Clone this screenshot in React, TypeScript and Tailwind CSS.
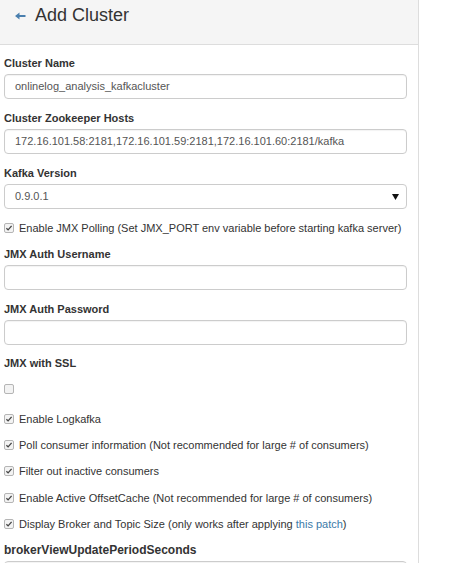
import React from "react";

const font = { fontFamily: '"Liberation Sans", Arial, sans-serif' };

function Label({ children, className = "" }: { children: React.ReactNode; className?: string }) {
  return <div className={`h-4 text-[11px] leading-4 font-bold text-[#333] ${className}`}>{children}</div>;
}

function TextInput({ value = "" }: { value?: string }) {
  return (
    <div className="mt-[3px] h-[25px] w-[403px] rounded-[4px] border border-[#ccc] bg-white pl-[10px] text-[11px] leading-[23px] text-[#555] shadow-[inset_0_1px_1px_rgba(0,0,0,0.05)]">
      {value}
    </div>
  );
}

function Check({ checked = true, children, className = "" }: { checked?: boolean; children?: React.ReactNode; className?: string }) {
  return (
    <div className={`flex h-4 items-center text-[11px] leading-4 text-[#333] ${className}`}>
      <span className="ml-[4px] flex h-[10px] w-[10px] items-center justify-center rounded-[2px] border border-[#b5b5b5] bg-[#f3f3f3]">
        {checked && (
          <svg width="8" height="8" viewBox="0 0 8 8">
            <path d="M1.4 4.2 L3.1 5.9 L6.6 1.8" fill="none" stroke="#444" strokeWidth="1.3" />
          </svg>
        )}
      </span>
      {children && <span className="ml-[5px] whitespace-nowrap">{children}</span>}
    </div>
  );
}

export default function App() {
  return (
    <div className="flex min-h-[563px] bg-white" style={font}>
      <div className="h-[563px] w-[419px] overflow-hidden border-r border-[#ddd]">
        <div className="flex h-[45px] items-start border-b border-[#ddd] bg-[#f5f5f5] pl-[15px] pt-[4px]">
          <svg className="mt-[8px]" width="11" height="8" viewBox="0 0 11 8">
            <path d="M0 4 L4.5 0.5 L4.5 3 L10.5 3 L10.5 5 L4.5 5 L4.5 7.5 Z" fill="#4a7fae" />
          </svg>
          <div className="ml-[9px] text-[18px] leading-[22px] text-[#333]">Add Cluster</div>
        </div>

        <div className="pl-[4px] pt-[10px]">
          <Label>Cluster Name</Label>
          <TextInput value="onlinelog_analysis_kafkacluster" />

          <Label className="mt-[11px]">Cluster Zookeeper Hosts</Label>
          <TextInput value="172.16.101.58:2181,172.16.101.59:2181,172.16.101.60:2181/kafka" />

          <Label className="mt-[11px]">Kafka Version</Label>
          <div className="relative mt-[3px] flex h-[25px] w-[403px] items-center rounded-[4px] border border-[#ccc] bg-white pl-[10px] text-[11px] text-[#555]">
            0.9.0.1
            <svg className="absolute right-[7px] top-[9px]" width="7" height="6" viewBox="0 0 7 6">
              <path d="M0 0 L7 0 L3.5 6 Z" fill="#111" />
            </svg>
          </div>

          <div className="-ml-[4px]">
            <Check className="mt-[11px]">Enable JMX Polling (Set JMX_PORT env variable before starting kafka server)</Check>
          </div>

          <Label className="mt-[10px]">JMX Auth Username</Label>
          <TextInput />

          <Label className="mt-[11px]">JMX Auth Password</Label>
          <TextInput />

          <Label className="mt-[10px]">JMX with SSL</Label>

          <div className="-ml-[4px]">
            <Check className="mt-[10px]" checked={false} />
            <Check className="mt-[14px]">Enable Logkafka</Check>
            <Check className="mt-[10px]">Poll consumer information (Not recommended for large # of consumers)</Check>
            <Check className="mt-[10px]">Filter out inactive consumers</Check>
            <Check className="mt-[11px]">Enable Active OffsetCache (Not recommended for large # of consumers)</Check>
            <Check className="mt-[10px]">
              Display Broker and Topic Size (only works after applying{" "}
              <span className="text-[#3b7aa8]">this patch</span>)
            </Check>
          </div>

          <div className="mt-[10px] h-4 text-[12px] leading-4 font-bold text-[#333]">brokerViewUpdatePeriodSeconds</div>
          <TextInput />
        </div>
      </div>
      <div className="flex-1" />
    </div>
  );
}
